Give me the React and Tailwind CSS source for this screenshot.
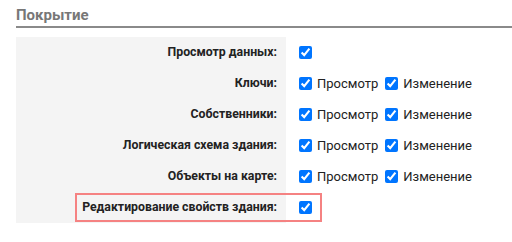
const ROWS = [
  { label: 'Просмотр данных:', single: true },
  { label: 'Ключи:' },
  { label: 'Собственники:' },
  { label: 'Логическая схема здания:' },
  { label: 'Объекты на карте:' },
  { label: 'Редактирование свойств здания:', single: true, marked: true },
];

const Check = () => (
  <input type="checkbox" defaultChecked className="m-0 h-[13px] w-[13px] accent-[#0075ff]" />
);

export default function App() {
  return (
    <div className="w-[512px] h-[242px] bg-white pl-4 pt-[6px] font-['Roboto',sans-serif]">
      <h2 className="text-[15px] font-bold text-[#777] leading-[18px] pb-[2px] border-b-2 border-[#8a8a8a]">
        Покрытие
      </h2>
      <table className="mt-[9px] border-collapse">
        <tbody>
          {ROWS.map((r) => (
            <tr key={r.label} className="h-[31px]">
              <td className="w-[270px] bg-[#f4f4f4] pr-[9px] text-right text-[12.3px] font-bold text-[#222] relative">
                {r.marked && (
                  <div className="absolute left-[59px] top-[1px] w-[247px] h-[29px] border-2 border-[#f58282] z-10" />
                )}
                {r.label}
              </td>
              <td className="pl-[13px] align-middle">
                <div className="flex items-center text-[13px] text-[#222]">
                  <Check />
                  {!r.single && (
                    <>
                      <span className="ml-[5px] mr-[7px]">Просмотр</span>
                      <Check />
                      <span className="ml-[5px]">Изменение</span>
                    </>
                  )}
                </div>
              </td>
            </tr>
          ))}
        </tbody>
      </table>
    </div>
  );
}
